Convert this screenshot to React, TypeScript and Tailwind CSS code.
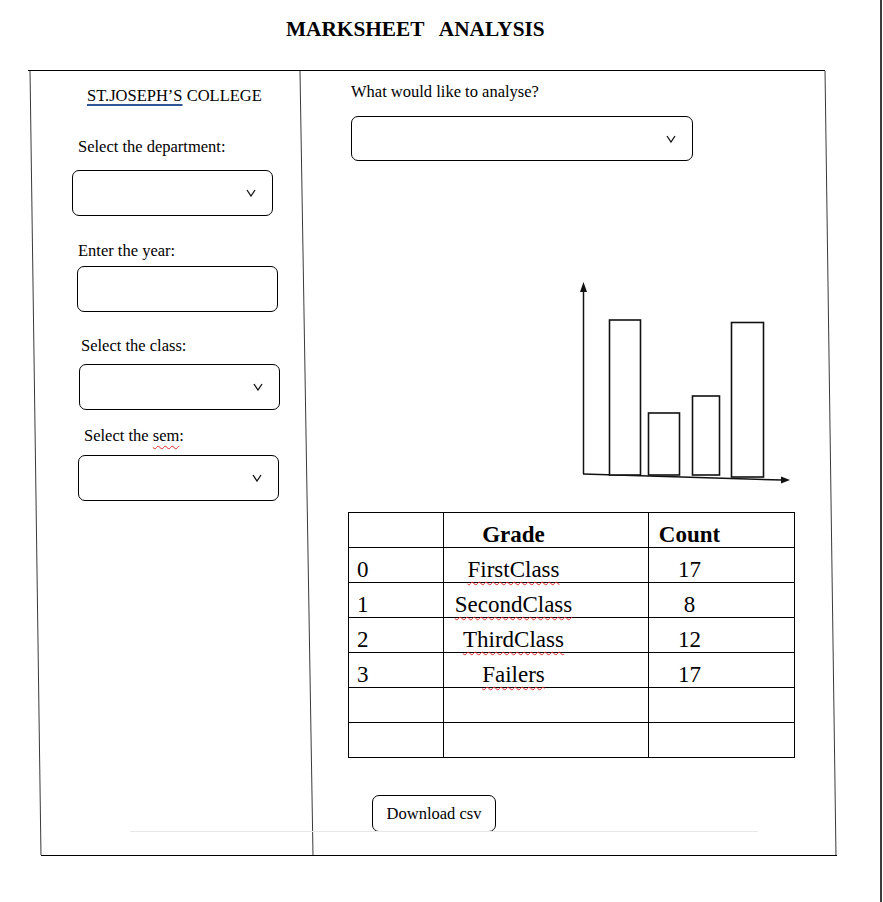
import React from "react";

function Chevron() {
  return (
    <svg width="10" height="8" viewBox="0 0 10 8" className="block">
      <polyline points="1,1 5,7 9,1" fill="none" stroke="#111" strokeWidth="1.3" />
    </svg>
  );
}

function Select({ className }: { className: string }) {
  return (
    <div className={`flex items-center justify-end rounded-[7px] border border-black pr-[16px] ${className}`}>
      <Chevron />
    </div>
  );
}

function Chart() {
  return (
    <svg width="216" height="206" viewBox="578 278 216 206" className="block">
      <line x1="583.5" y1="474" x2="583.5" y2="290" stroke="#111" strokeWidth="1.5" />
      <polygon points="583.5,282 580,292 587,292" fill="#111" />
      <line x1="583" y1="474" x2="782" y2="480" stroke="#111" strokeWidth="1.5" />
      <polygon points="790,480 781,476.5 781,483.5" fill="#111" />
      <rect x="609.5" y="320" width="31" height="155" fill="white" stroke="#111" strokeWidth="1.6" />
      <rect x="648.5" y="413" width="31" height="62" fill="white" stroke="#111" strokeWidth="1.6" />
      <rect x="692.5" y="396" width="27" height="79" fill="white" stroke="#111" strokeWidth="1.6" />
      <rect x="731.5" y="322.5" width="32" height="154.5" fill="white" stroke="#111" strokeWidth="1.6" />
    </svg>
  );
}

const rows = [
  ["0", "FirstClass", "17"],
  ["1", "SecondClass", "8"],
  ["2", "ThirdClass", "12"],
  ["3", "Failers", "17"],
];

const wavy = "underline decoration-wavy decoration-[#e02b2b] decoration-1 underline-offset-[4px]";

export default function App() {
  return (
    <div className="relative flex w-[883px] min-h-[902px] bg-white text-black font-['Liberation_Serif','Times_New_Roman',serif]">
      <div className="w-[880px] flex flex-col">
        <div className="h-[65px] pt-[16px] pl-[286px]">
          <h1 className="whitespace-pre text-[21.3px] font-bold leading-[26px]">MARKSHEET   ANALYSIS</h1>
        </div>

        <div className="mt-[5px] ml-[28px] w-[797px] h-px bg-black" />

        <div className="ml-[35px] flex h-[784px]">
          <div className="w-px h-full bg-[#3a3a3a] skew-x-[0.8deg]" />

          <div className="w-[270px] flex flex-col items-start text-[16.5px] leading-[20px]">
            <div className="mt-[15px] ml-[51px]">
              <span className="underline decoration-[#2f5597] decoration-2 underline-offset-[3px]">ST.JOSEPH’S</span> COLLEGE
            </div>
            <div className="mt-[31px] ml-[42px]">Select the department:</div>
            <Select className="mt-[13px] ml-[36px] w-[201px] h-[46px]" />
            <div className="mt-[25px] ml-[42px]">Enter the year:</div>
            <div className="mt-[5px] ml-[41px] w-[201px] h-[46px] rounded-[7px] border border-black" />
            <div className="mt-[24px] ml-[45px]">Select the class:</div>
            <Select className="mt-[8px] ml-[43px] w-[201px] h-[46px]" />
            <div className="mt-[16px] ml-[48px]">
              Select the <span className={wavy}>sem</span>:
            </div>
            <Select className="mt-[9px] ml-[42px] w-[201px] h-[46px]" />
          </div>

          <div className="w-px h-full bg-[#3a3a3a] skew-x-[0.95deg]" />

          <div className="w-[523px] flex flex-col items-start">
            <div className="mt-[11px] ml-[44px] text-[16.5px] leading-[20px]">What would like to analyse?</div>
            <Select className="mt-[14px] ml-[44px] w-[342px] h-[45px]" />
            <div className="mt-[117px] ml-[271px]">
              <Chart />
            </div>
            <table className="mt-[28px] ml-[41px] border-collapse table-fixed text-[23px] leading-[24px]">
              <colgroup>
                <col className="w-[95px]" />
                <col className="w-[205px]" />
                <col className="w-[146px]" />
              </colgroup>
              <tbody>
                <tr className="h-[35px]">
                  <td className="border border-black p-0" />
                  <td className="border border-black p-0 pr-[65px] text-center align-bottom font-bold">Grade</td>
                  <td className="border border-black p-0 pr-[64px] text-center align-bottom font-bold">Count</td>
                </tr>
                {rows.map((r) => (
                  <tr key={r[0]} className="h-[35px]">
                    <td className="border border-black p-0 pl-[8px] align-bottom">{r[0]}</td>
                    <td className="border border-black p-0 pr-[65px] text-center align-bottom">
                      <span className={wavy}>{r[1]}</span>
                    </td>
                    <td className="border border-black p-0 pr-[64px] text-center align-bottom">{r[2]}</td>
                  </tr>
                ))}
                {[0, 1].map((i) => (
                  <tr key={`e${i}`} className="h-[35px]">
                    <td className="border border-black p-0" />
                    <td className="border border-black p-0" />
                    <td className="border border-black p-0" />
                  </tr>
                ))}
              </tbody>
            </table>
            <button className="mt-[37px] ml-[65px] w-[124px] h-[37px] flex items-center justify-center rounded-[7px] border border-black bg-white text-[16.5px] leading-[20px]">
              Download csv
            </button>
          </div>

          <div className="w-px h-full bg-[#3a3a3a] skew-x-[0.8deg]" />
        </div>

        <div className="ml-[41px] w-[796px] h-px bg-black" />
      </div>
      <div className="w-[2px] bg-[#3c3c3c]" />

      <div className="pointer-events-none absolute left-[130px] top-[831px] w-[628px] h-px bg-[#e8e8e8]" />
    </div>
  );
}
